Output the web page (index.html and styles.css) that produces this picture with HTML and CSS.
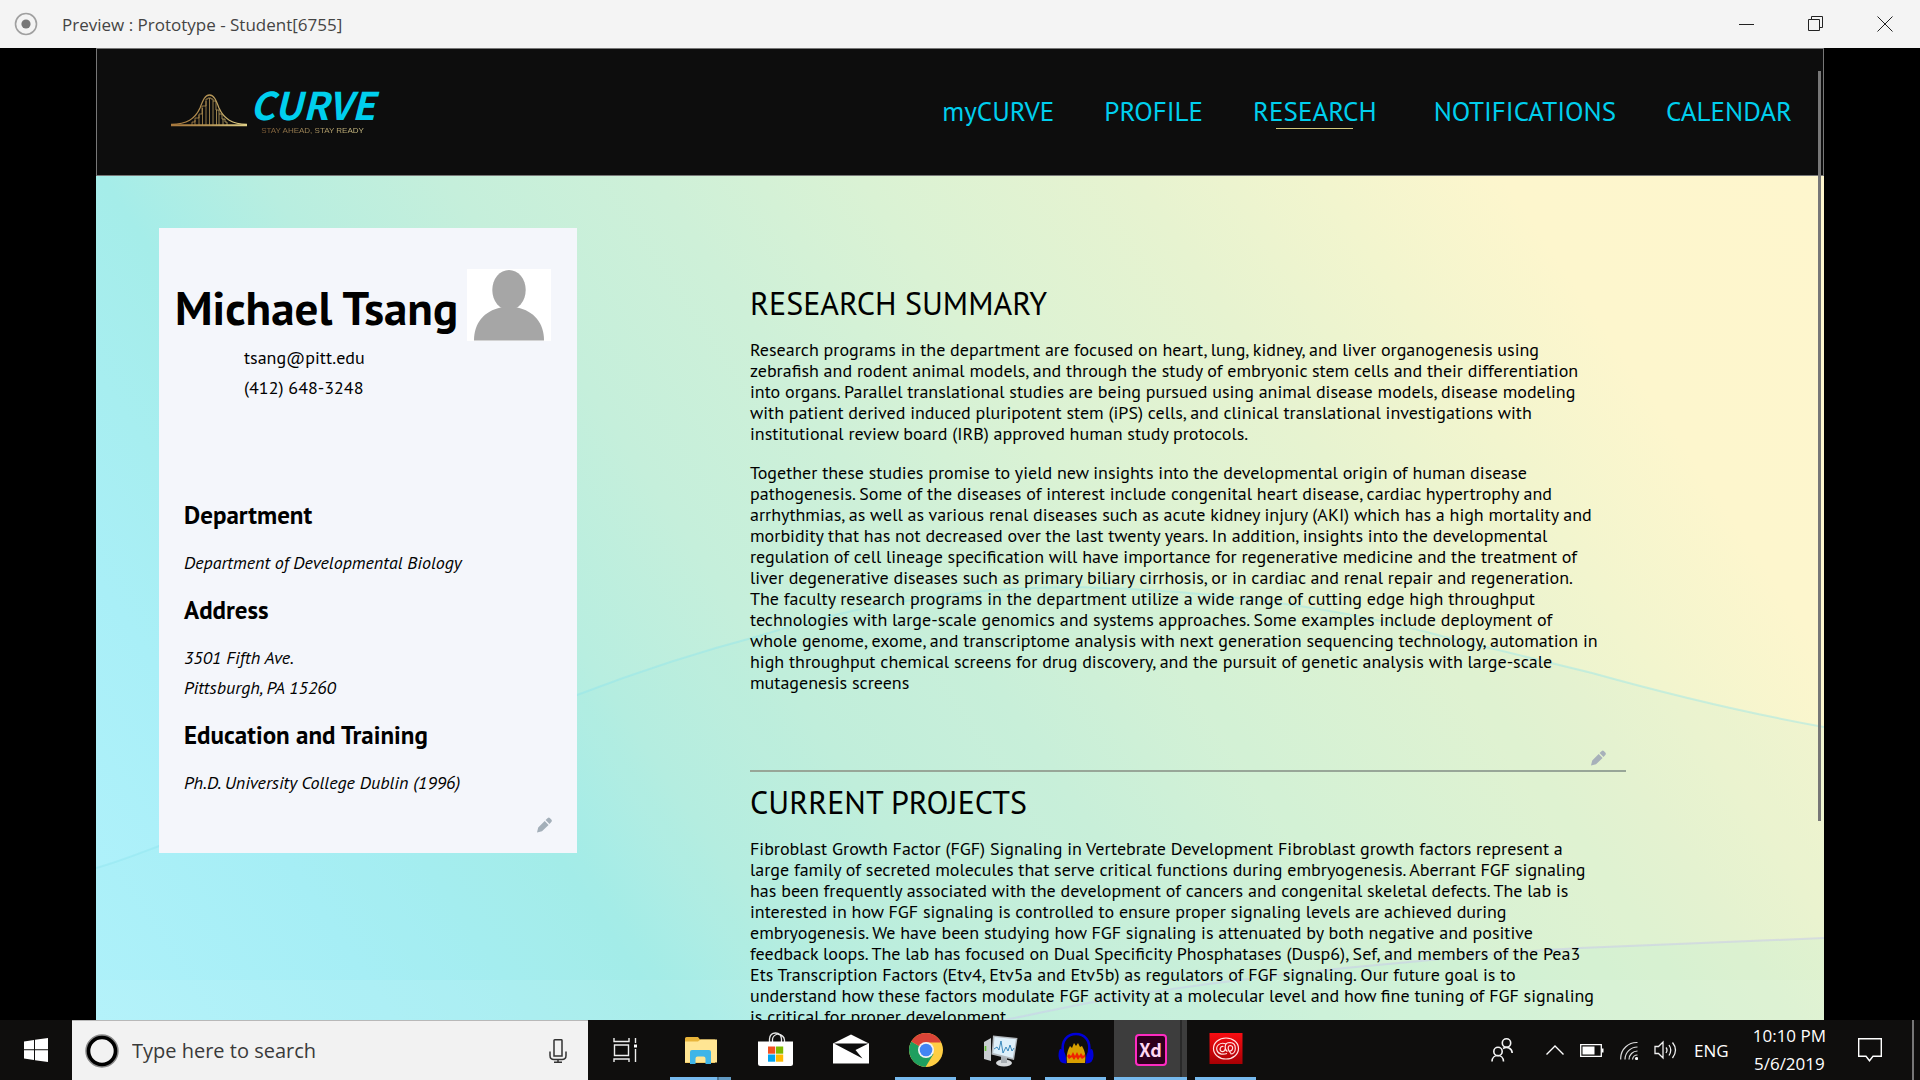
FILE: index.html
```html
<!DOCTYPE html>
<html lang="en">
<head>
<meta charset="utf-8">
<title>Preview : Prototype - Student[6755]</title>
<link rel="stylesheet" href="styles.css">
</head>
<body>
<div class="titlebar">
  <svg class="record" viewBox="0 0 24 24" aria-hidden="true"><circle cx="12" cy="12" r="10.5" fill="none" stroke="#a0a0a0" stroke-width="1.6"/><circle cx="12" cy="12" r="4.6" fill="#777"/></svg>
  <span class="window-title">Preview : Prototype - Student[6755]</span>
  <div class="window-controls">
    <button type="button" aria-label="Minimize"><svg viewBox="0 0 16 16"><path d="M0 8.5h15" stroke="#222" fill="none"/></svg></button>
    <button type="button" aria-label="Restore"><svg viewBox="0 0 16 16"><path d="M.5 3.5h11v11H.5zM3.500 3V.5h11v11H12" stroke="#222" fill="none"/></svg></button>
    <button type="button" aria-label="Close"><svg viewBox="0 0 16 16"><path d="M.5.5l15 15M15.500.5l-15 15" stroke="#222" fill="none"/></svg></button>
  </div>
</div>

<div class="stage">
  <div class="artboard">
    <svg class="waves" viewBox="0 0 1728 844" preserveAspectRatio="none" aria-hidden="true">
      <path d="M0 692C22 686 42 678 63 670L481 519C541 496 602 476 663 460C770 426 880 411 981 411C1110 414 1240 430 1349 461L1496 497C1575 519 1650 537 1728 551V844H0Z" fill="#8fe6e6" fill-opacity=".08"/>
      <path d="M0 692C22 686 42 678 63 670L481 519C541 496 602 476 663 460C770 426 880 411 981 411C1110 414 1240 430 1349 461L1496 497C1575 519 1650 537 1728 551" fill="none" stroke="#8ce4ee" stroke-opacity=".4" stroke-width="2"/>
      <path d="M908 844C960 834 1010 822 1055 816C1150 802 1230 793 1324 785C1380 779 1430 775 1484 772L1728 762V844Z" fill="#a8eed8" fill-opacity=".14"/>
      <path d="M908 844C960 834 1010 822 1055 816C1150 802 1230 793 1324 785C1380 779 1430 775 1484 772L1728 762" fill="none" stroke="#c8c8ec" stroke-opacity=".5" stroke-width="2"/>
      <path d="M0 804H1728V844H0Z" fill="#fff" fill-opacity=".08"/>
    </svg>

    <header class="site-header">
      <a class="logo" href="#" aria-label="Curve home">
        <svg class="bell" viewBox="0 0 76 33" aria-hidden="true">
          <defs><linearGradient id="gold" x1="0" x2="76" y1="0" y2="0" gradientUnits="userSpaceOnUse"><stop offset="0" stop-color="#a8783c"/><stop offset=".5" stop-color="#b39355"/><stop offset="1" stop-color="#e0d088"/></linearGradient></defs>
          <g fill="none" stroke="url(#gold)">
            <path d="M0 31.200H76" stroke-width="2"/>
            <path d="M0 30.500C16 30 24 25 29 14C32 6 34 1 38.500 1S45 6 48 14C53 25 61 30 76 30.500" stroke-width="1.300"/>
            <path d="M21 31V28H24V24H28V20H31V12H35V5H37V4H40V5H42V7H45V16H48V20H51V25H54V28H56V31M24 31V26M28 31V21M31.500 31V14M35 31V7M38.500 31V4M42 31V7M45.500 31V16M48 31V20M52 31V25" stroke-width=".8"/>
          </g>
        </svg>
        <span class="wordmark"><span class="brand">CURVE</span><span class="tagline">STAY AHEAD, STAY READY</span></span>
      </a>
      <nav class="site-nav">
        <a href="#">myCURVE</a>
        <a href="#">PROFILE</a>
        <a href="#" class="active" aria-current="page">RESEARCH</a>
        <a href="#">NOTIFICATIONS</a>
        <a href="#">CALENDAR</a>
      </nav>
    </header>

    <main class="content">
      <aside class="card">
        <div class="card-head">
          <h1>Michael Tsang</h1>
          <svg class="avatar" viewBox="0 0 84 72" aria-label="Profile picture"><path d="M0 0h84v72H0z" fill="#fff"/><ellipse cx="42" cy="21" rx="16.700" ry="20" fill="#a6a6a6"/><path d="M7 71.500C7 54 17 42 34 38.500H50C67 42 77 54 77 71.500Z" fill="#a6a6a6"/></svg>
        </div>
        <div class="contact">
          <p>tsang@pitt.edu</p>
          <p>(412) 648-3248</p>
        </div>
        <div class="details">
          <section><h3>Department</h3><p>Department of Developmental Biology</p></section>
          <section><h3>Address</h3><p>3501 Fifth Ave.</p><p>Pittsburgh, PA 15260</p></section>
          <section><h3>Education and Training</h3><p>Ph.D. University College Dublin (1996)</p></section>
        </div>
        <button type="button" class="edit" aria-label="Edit profile"><svg viewBox="0 0 16 16"><path d="M1 15.500L2.200 10.500 8.700 4 12.600 7.900 6 14.300ZM9.600 3.100L11.800 1Q12.800 .2 13.800 1L15.500 2.800Q16.200 3.800 15.500 4.700L13.500 6.900Z" fill="#a3afb9"/></svg></button>
      </aside>

      <div class="research">
        <section>
          <h2>RESEARCH SUMMARY</h2>
          <p>Research programs in the department are focused on heart, lung, kidney, and liver organogenesis using zebrafish and rodent animal models, and through the study of embryonic stem cells and their differentiation into organs. Parallel translational studies are being pursued using animal disease models, disease modeling with patient derived induced pluripotent stem (iPS) cells, and clinical translational investigations with institutional review board (IRB) approved human study protocols.</p>
          <p>Together these studies promise to yield new insights into the developmental origin of human disease pathogenesis. Some of the diseases of interest include congenital heart disease, cardiac hypertrophy and arrhythmias, as well as various renal diseases such as acute kidney injury (AKI) which has a high mortality and morbidity that has not decreased over the last twenty years. In addition, insights into the developmental regulation of cell lineage specification will have importance for regenerative medicine and the treatment of liver degenerative diseases such as primary biliary cirrhosis, or in cardiac and renal repair and regeneration. The faculty research programs in the department utilize a wide range of cutting edge high throughput technologies with large-scale genomics and systems approaches. Some examples include deployment of whole genome, exome, and transcriptome analysis with next generation sequencing technology, automation in high throughput chemical screens for drug discovery, and the pursuit of genetic analysis with large-scale mutagenesis screens</p>
          <button type="button" class="edit" aria-label="Edit research summary"><svg viewBox="0 0 16 16"><path d="M1 15.500L2.200 10.500 8.700 4 12.600 7.900 6 14.300ZM9.600 3.100L11.800 1Q12.800 .2 13.800 1L15.500 2.800Q16.200 3.800 15.500 4.700L13.500 6.900Z" fill="#a7b1ba"/></svg></button>
        </section>
        <section>
          <h2>CURRENT PROJECTS</h2>
          <p>Fibroblast Growth Factor (FGF) Signaling in Vertebrate Development Fibroblast growth factors represent a large family of secreted molecules that serve critical functions during embryogenesis. Aberrant FGF signaling has been frequently associated with the development of cancers and congenital skeletal defects. The lab is interested in how FGF signaling is controlled to ensure proper signaling levels are achieved during embryogenesis. We have been studying how FGF signaling is attenuated by both negative and positive feedback loops. The lab has focused on Dual Specificity Phosphatases (Dusp6), Sef, and members of the Pea3 Ets Transcription Factors (Etv4, Etv5a and Etv5b) as regulators of FGF signaling. Our future goal is to understand how these factors modulate FGF activity at a molecular level and how fine tuning of FGF signaling is critical for proper development.</p>
        </section>
      </div>
    </main>
    <div class="scroll-thumb"></div>
  </div>
</div>

<footer class="taskbar">
  <button type="button" class="start" aria-label="Start"><svg viewBox="0 0 24 24"><path d="M0 3.400L10 2V11.300H0ZM11 1.800L24 0V11.300H11ZM0 12.300H10V22L0 20.600ZM11 12.300H24V24L11 22.200Z" fill="#fff"/></svg></button>
  <div class="search">
    <svg class="cortana" viewBox="0 0 36 36" aria-hidden="true"><circle cx="18" cy="18" r="15.500" fill="none" stroke="#888" stroke-width="2.500"/><circle cx="18" cy="18" r="13.500" fill="#f2f2f2" stroke="#000" stroke-width="3.600"/></svg>
    <input type="text" placeholder="Type here to search" aria-label="Type here to search">
    <button type="button" aria-label="Voice search"><svg viewBox="0 0 18 24"><path d="M5 1.500Q5 .8 5.700.8H12.300Q13 .8 13 1.500V17H5ZM1 12.500V16.500Q1 20.500 5 20.500H13Q17 20.500 17 16.500V12.500M9 20.500V23.200M5 23.200H13" fill="none" stroke="#333" stroke-width="1.500"/></svg></button>
  </div>
  <div class="apps">
    <button type="button" aria-label="Task view"><svg viewBox="0 0 36 36"><path d="M6 6V9.500H21V6M6.500 13H20.500V23.500H6.500ZM6 30V27H21V30M27.500 6V11M27.500 17V30" fill="none" stroke="#eee" stroke-width="1.400"/><path d="M26 12.500h3v3h-3z" fill="#fff"/></svg></button>
    <button type="button" class="running grouped" aria-label="File Explorer"><svg viewBox="0 0 36 36"><path d="M2 6.500Q2 5 3.500 5H15L17 7.500H32V31H2Z" fill="#e8b43a"/><path d="M2 9.500H15L17.500 7.500H34V30.500H2Z" fill="#ffe593"/><path d="M7 32V20Q7 18 9 18H26Q28 18 28 20V32H22.500V26.500Q22.500 24.500 20.500 24.500H14.500Q12.500 24.500 12.500 26.500V32Z" fill="#3fb5e8"/></svg></button>
    <button type="button" aria-label="Microsoft Store"><svg viewBox="0 0 36 36"><path d="M11.500 11V7Q12 1 17.500 1T23.500 7V11M14.500 11V7Q15 3.500 19.500 2Q26 3 26.500 8V11" fill="none" stroke="#e8e8e8" stroke-width="1.300"/><path d="M0 9.500H35V31.500Q35 34 32.500 34H2.500Q0 34 0 31.500Z" fill="#fff"/><path d="M10 14.500h7.200v7.200H10z" fill="#f25022"/><path d="M18 14.500h7.200v7.200H18z" fill="#7fba00"/><path d="M10 22.500h7.200v7.200H10z" fill="#00a4ef"/><path d="M18 22.500h7.200v7.200H18z" fill="#ffb900"/></svg></button>
    <button type="button" aria-label="Mail"><svg viewBox="0 0 36 36"><path d="M0 11.500L18 2.500 36 11.500V31.500H0Z" fill="#fff"/><path d="M1 11.500H35.500L22.500 18 29.500 26.500Z" fill="#0d0d0d"/></svg></button>
    <button type="button" class="running" aria-label="Chrome"><svg viewBox="0 0 36 36"><circle cx="18" cy="18" r="17" fill="#ffce44"/><path d="M18 18L3.300 9.500A17 17 0 0 0 17.500 35L25.500 22Z" fill="#1f9f5f"/><path d="M18 18L3.300 9.500A17 17 0 0 1 32.700 9.500V10.500H18L11 21.500Z" fill="#db4437"/><circle cx="18" cy="18" r="8" fill="#f3f3f3"/><circle cx="18" cy="18" r="6.300" fill="#4285f4"/></svg></button>
    <button type="button" class="running" aria-label="System monitor"><svg viewBox="0 0 36 36"><path d="M1 10L8 6V29L1 27Z" fill="#c8cdd0"/><path d="M2.500 14V19" stroke="#61c02f" stroke-width="1.600"/><ellipse cx="21" cy="31" rx="8" ry="3.500" fill="#d7dadd"/><path d="M18 24H24V31H18Z" fill="#a9afb4"/><path d="M10 3.500L34.500 6 31 28 8.500 22.500Z" fill="#b3b9be"/><path d="M11.500 5L33 7.300 29.800 26 10.200 21Z" fill="#dff0fa"/><path d="M11 17L14 15 16 18 18 9 20 21 23 15 25 19 27 13 29 19 31 16" fill="none" stroke="#2b7fb5" stroke-width=".9"/></svg></button>
    <button type="button" class="running" aria-label="Audacity"><svg viewBox="0 0 36 36"><path d="M5 20C3 8 10 2 18 2S33 8 31 20" fill="none" stroke="#0000d8" stroke-width="2.600"/><path d="M9 31C8 22 10 18 12 14L14 16 16 11 18 14 20 11 22 15 24 14C27 19 28 24 27 31Z" fill="#d8a000"/><path d="M9 24L11 22 13 24 15 20 17 24 19 20 21 24 23 21 25 24 27 22V25L24 27 22 25 20 28 18 25 16 28 14 25 11 27Z" fill="#f02000"/><path d="M2 17Q8 17 8.500 31.500Q1 32 .5 24Q.5 19 2 17ZM34 17Q28 17 27.500 31.500Q35 32 35.500 24Q35.500 19 34 17Z" fill="#0000d8"/></svg></button>
    <button type="button" class="running current" aria-label="Adobe XD"><span class="xd">Xd</span></button>
    <button type="button" class="running" aria-label="Creative Cloud"><svg viewBox="0 0 36 36"><defs><linearGradient id="ccred" x1="0" x2="0" y1="0" y2="1"><stop offset="0" stop-color="#f80d12"/><stop offset="1" stop-color="#a80004"/></linearGradient></defs><path d="M1.500 1h33v31h-33z" fill="url(#ccred)"/><g fill="none" stroke="#ffe3e3" stroke-width="1.200"><ellipse cx="18" cy="16.500" rx="12.500" ry="10.500"/><path d="M22.500 22C28.500 22 29.500 11 22 10.500C15.500 10.500 16.500 18 19.500 19.500M18 12C12 9.500 7.500 14 9 18.500C10.500 23 16 22.500 19 21.500M15.500 14.500C12 14 11 18 13.500 19.500C16 20 17 18.500 17 17M21 19C25 19.500 26 14 22.500 13.500C20 13.500 19.500 16 21 19L23 21.500"/></g></svg></button>
  </div>
  <div class="tray">
    <button type="button" class="people" aria-label="People"><svg viewBox="0 0 22 24"><g fill="none" stroke="#f5f5f5" stroke-width="1.600"><circle cx="15.500" cy="5" r="4.200"/><circle cx="7" cy="13.500" r="4.200"/><path d="M1 23.500C1 15.500 12.500 15.500 12.500 23.500M12 10.500C16 8 21 10 21.200 15"/></g></svg></button>
    <button type="button" aria-label="Show hidden icons"><svg class="w18" viewBox="0 0 18 24"><path d="M.5 16.500L9 8 17.500 16.500" fill="none" stroke="#fff" stroke-width="1.400"/></svg></button>
    <button type="button" aria-label="Battery"><svg class="w24" viewBox="0 0 24 24"><path d="M.7 6.700H21.300V18.300H.7Z" fill="none" stroke="#fff" stroke-width="1.300"/><path d="M2.500 8.500h12v8h-12zM22 10.500h1.500v4H22z" fill="#fff"/></svg></button>
    <button type="button" aria-label="Network"><svg class="w18" viewBox="0 0 18 24"><g fill="none" stroke="#ddd" stroke-width="1.200"><path d="M.7 21.500V20A16 16 0 0 1 17.500 4.500M5 21.500A12.500 12.500 0 0 1 17.500 9M9 21.500A8.500 8.500 0 0 1 17.500 13M12.500 21.500A5 5 0 0 1 17.500 17"/></g><circle cx="16.500" cy="20.500" r="1.600" fill="#fff"/></svg></button>
    <button type="button" aria-label="Volume"><svg class="w24" viewBox="0 0 24 24"><path d="M1 8.500H4.500L9 4V20L4.500 15.500H1ZM12 9.500Q14 12 12 15M15 7Q18.500 12 15 17.500M18.500 4.500Q24.500 12 18.500 20" fill="none" stroke="#f0f0f0" stroke-width="1.300"/></svg></button>
    <button type="button" class="lang">ENG</button>
    <button type="button" class="clock"><span>10:10 PM</span><span>5/6/2019</span></button>
    <button type="button" class="notify" aria-label="Action center"><svg class="w24" viewBox="0 0 24 24"><path d="M.7.7H23.300V18.300H15L11.500 22.800 8 18.300H.7Z" fill="none" stroke="#fff" stroke-width="1.400"/></svg></button>
    <button type="button" class="show-desktop" aria-label="Show desktop"></button>
  </div>
</footer>
</body>
</html>
```
FILE: styles.css
```css
* {
  box-sizing: border-box;
}

body {
  margin: 0;
  height: 100vh;
  display: flex;
  flex-direction: column;
  overflow: hidden;
  background: #000;
  color: #000;
  font-family: "PT Sans", "Noto Sans", sans-serif;
  font-size: 18px;
}

h1, h2, h3, p {
  margin: 0;
}

button {
  border: 0;
  padding: 0;
  background: none;
  color: inherit;
  font: inherit;
}

a {
  color: inherit;
  text-decoration: none;
}

svg {
  display: block;
}

/* Window title bar */

.titlebar {
  flex: none;
  display: flex;
  align-items: center;
  height: 48px;
  padding: 0 1px 0 14px;
  background: #f4f4f4;
  color: #444;
  font-family: "Open Sans", sans-serif;
  font-size: 17px;
}

.record {
  width: 24px;
  height: 24px;
}

.window-title {
  margin-left: 24px;
}

.window-controls {
  display: flex;
  margin-left: auto;
}

.window-controls button {
  display: grid;
  place-items: center;
  width: 69px;
  height: 48px;
}

.window-controls svg {
  width: 16px;
  height: 16px;
}

/* Prototype artboard */

.stage {
  flex: 1;
  min-height: 0;
  padding: 0 5%;
  overflow: hidden;
}

.artboard {
  position: relative;
  height: 100%;
  overflow: hidden;
}

.waves {
  position: absolute;
  left: 0;
  top: 128px;
  width: 100%;
  height: calc(100% - 128px);
  background: linear-gradient(56deg, #b1f2fc 0%, #a9eff7 13%, #a5ede9 25%, #b8eee0 32%, #c5efdb 40%, #cef0d8 49%, #daf2d4 58%, #e7f3d0 70%, #f2f5ce 78%, #fdf6cd 86%, #fef6cd 100%);
}

.scroll-thumb {
  position: absolute;
  top: 23px;
  right: 3px;
  width: 3px;
  height: 750px;
  background: #777;
}

.site-header {
  position: relative;
  display: flex;
  align-items: center;
  justify-content: space-between;
  height: 128px;
  padding: 0 31px 0 74px;
  border: 1px solid #777;
  background: #0d0d0d;
}

.logo {
  display: flex;
  align-items: center;
  gap: 3px;
  padding-bottom: 4px;
}

.bell {
  width: 76px;
  height: 33px;
}

.wordmark {
  display: flex;
  flex-direction: column;
  align-items: center;
}

.brand {
  color: #00cfee;
  font: italic bold 38px/42px "Noto Sans CJK JP", sans-serif;
}

.tagline {
  background: linear-gradient(90deg, #7d5a35, #d6c98c);
  background-clip: text;
  color: transparent;
  font: 8px/12px "Liberation Sans", sans-serif;
}

.site-nav {
  display: flex;
  gap: 50px;
  padding-bottom: 2px;
  color: #00cfee;
  font-size: 27px;
  line-height: 36px;
}

.site-nav .active {
  position: relative;
  padding-right: 7px;
}

.site-nav .active::after {
  content: "";
  position: absolute;
  left: 23px;
  bottom: 0;
  width: 77px;
  height: 1px;
  background: #d4c87c;
}

.content {
  position: relative;
  display: flex;
  align-items: flex-start;
  gap: 173px;
  padding: 52px 198px 0 63px;
}

/* Profile card */

.card {
  flex: none;
  width: 418px;
  padding: 41px 25px 20px;
  background: #f4f6fb;
}

.card-head {
  display: flex;
  align-items: flex-end;
  justify-content: space-between;
  margin: 0 1px 0 -9px;
}

h1 {
  font-size: 47px;
  line-height: 66px;
  white-space: nowrap;
}

.avatar {
  flex: none;
  width: 84px;
  height: 72px;
}

.contact {
  margin-top: 2px;
  padding-left: 60px;
  line-height: 30px;
}

.details {
  display: flex;
  flex-direction: column;
  gap: 16px;
  margin-top: 96px;
}

h3 {
  margin-bottom: 17px;
  font-size: 25px;
  line-height: 32px;
}

.details p {
  font-style: italic;
  line-height: 30px;
}

.edit {
  display: block;
  width: 16px;
  height: 16px;
  margin: 19px 0 0 auto;
}

.edit svg {
  width: 16px;
  height: 16px;
}

/* Research column */

.research {
  flex: 1;
  min-width: 0;
  padding-top: 55px;
}

.research section {
  margin-bottom: 10px;
}

.research section:first-child {
  padding-bottom: 4px;
  border-bottom: 2px solid #98a698;
}

h2 {
  font-size: 32px;
  font-weight: normal;
  line-height: 40px;
}

.research p {
  max-width: 854px;
  margin-top: 16px;
  line-height: 21px;
}

.research p + p {
  margin-top: 18px;
}

.research .edit {
  margin: 57px 20px 0 auto;
}

/* Taskbar */

.taskbar {
  flex: none;
  display: flex;
  height: 60px;
  background: #0f0e0d;
  color: #fff;
  font-family: "Open Sans", sans-serif;
  font-size: 17px;
}

.start {
  display: grid;
  place-items: center;
  width: 72px;
}

.start svg {
  width: 24px;
  height: 24px;
}

.search {
  display: flex;
  align-items: center;
  width: 516px;
  padding: 0 21px 0 12px;
  border-top: 1px solid #b8b8b8;
  background: #f2f2f2;
}

.cortana {
  flex: none;
  width: 36px;
  height: 36px;
}

.search input {
  flex: 1;
  min-width: 0;
  margin-left: 12px;
  padding: 0;
  border: 0;
  background: none;
  color: #333;
  font: 20px "Open Sans", sans-serif;
}

.search input::placeholder {
  color: #3a3a3a;
  opacity: 1;
}

.search button svg {
  width: 18px;
  height: 24px;
}

.apps {
  display: flex;
}

.apps button {
  position: relative;
  display: grid;
  place-items: center;
  width: 75px;
}

.apps svg {
  width: 36px;
  height: 36px;
}

.apps .running::after {
  content: "";
  position: absolute;
  left: 7px;
  right: 7px;
  bottom: 0;
  height: 3px;
  background: #76b9ed;
}

.apps .grouped::after {
  background: linear-gradient(90deg, #76b9ed 47px, #4a7595 47px, #4a7595 49px, #6199c2 49px);
}

.apps .current {
  background: linear-gradient(90deg, transparent 1px, #3d3d3d 1px, #3d3d3d 67px, #292929 67px, #292929 69px, #3d3d3d 69px, #3d3d3d 74px, transparent 74px);
}

.apps .current::after {
  left: 1px;
  right: 1px;
}

.xd {
  width: 32px;
  height: 32px;
  border: 2px solid #ff2bc2;
  border-radius: 4px;
  background: #2e001e;
  color: #ffd9f2;
  font: bold 18px/26px "Noto Sans CJK JP", sans-serif;
}

.tray {
  display: flex;
  align-items: center;
  gap: 16px;
  margin-left: auto;
}

.people {
  margin-right: 17px;
}

.people svg {
  width: 22px;
  height: 24px;
}

.w18 {
  width: 18px;
  height: 24px;
}

.w24 {
  width: 24px;
  height: 24px;
}

.clock {
  display: flex;
  flex-direction: column;
  align-items: center;
  margin: 0 16px 0 8px;
  line-height: 28px;
}

.notify {
  margin-right: 14px;
}

.show-desktop {
  align-self: stretch;
  width: 8px;
  border-left: 2px solid #777;
}
```
